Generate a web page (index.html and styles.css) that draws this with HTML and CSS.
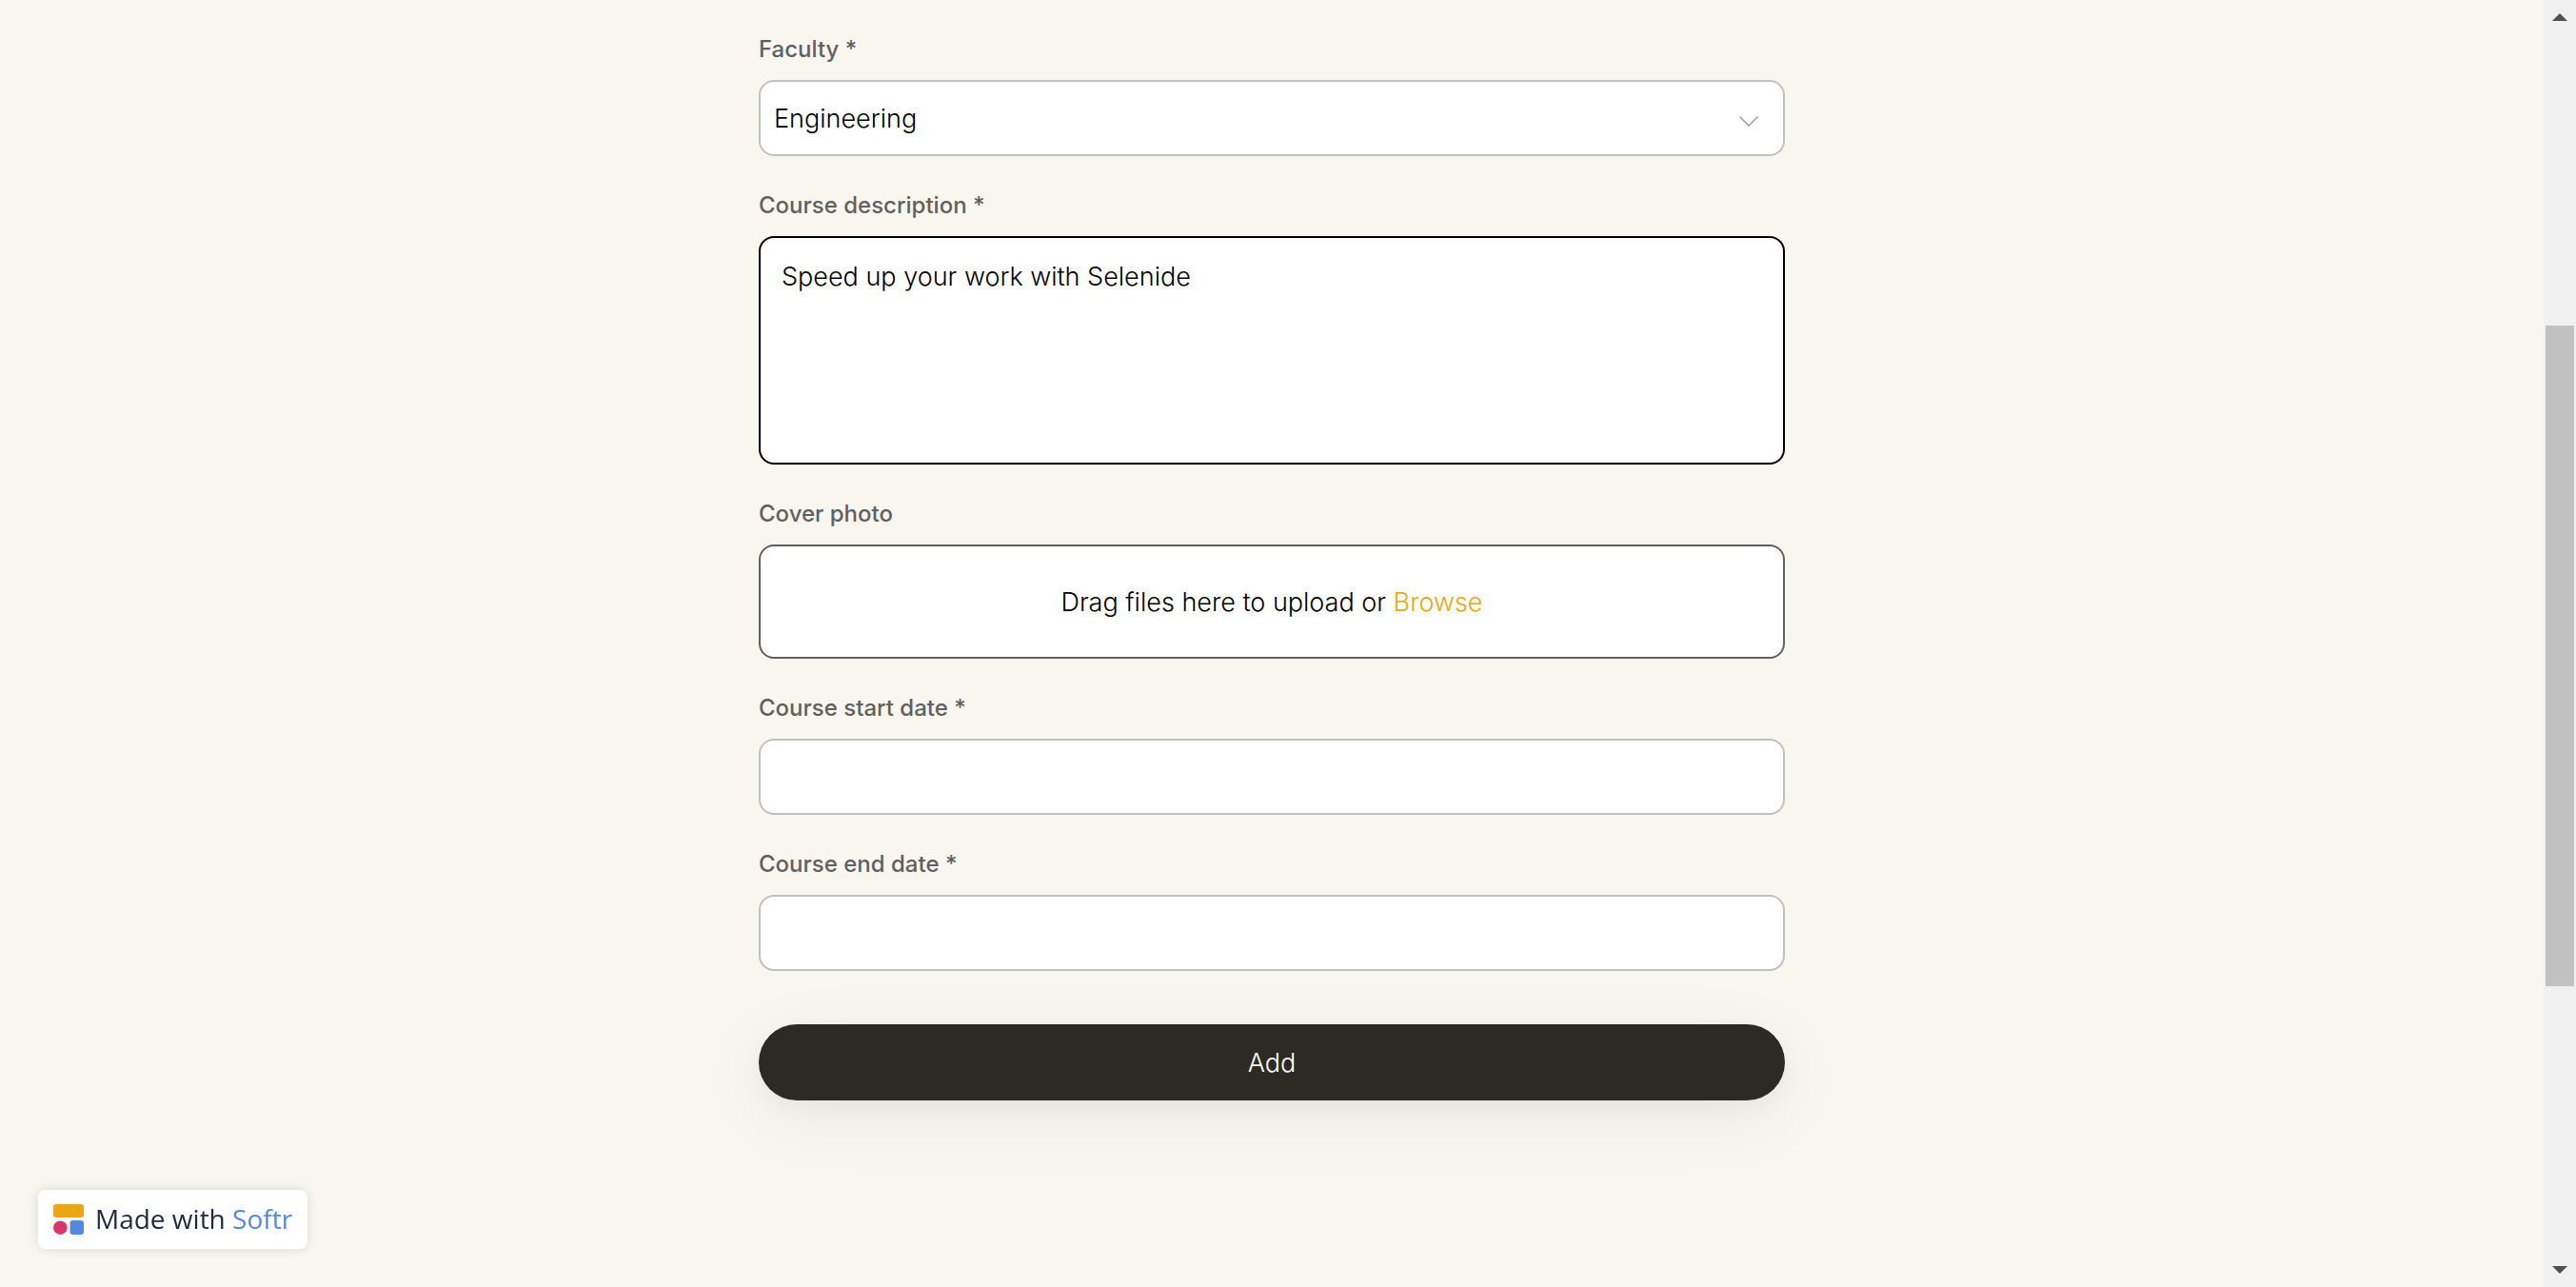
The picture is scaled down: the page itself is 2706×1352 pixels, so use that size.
FILE: index.html
```html
<!DOCTYPE html>
<html lang="en">
<head>
  <meta charset="utf-8">
  <meta name="viewport" content="width=device-width, initial-scale=1">
  <title>Add course</title>
  <link rel="stylesheet" href="styles.css">
</head>
<body>
  <div class="page">
    <main class="content">
      <form class="form">
        <div class="field">
          <label class="label" for="faculty">Faculty *</label>
          <div class="select">
            <select class="control select-input" id="faculty" required>
              <option selected>Engineering</option>
            </select>
            <svg class="chevron" width="20" height="12" viewBox="0 0 20 12" aria-hidden="true"><path d="M.5 1.500 10 11l9.500-9.500" fill="none" stroke="#999" stroke-width="1.400"/></svg>
          </div>
        </div>
        <div class="field">
          <label class="label" for="description">Course description *</label>
          <textarea class="control description" id="description" required>Speed up your work with Selenide</textarea>
        </div>
        <div class="field">
          <label class="label" for="cover">Cover photo</label>
          <div class="control upload">
            <span>Drag files here to upload or <label class="browse" for="cover">Browse</label></span>
            <input class="file" id="cover" type="file" hidden>
          </div>
        </div>
        <div class="field">
          <label class="label" for="start">Course start date *</label>
          <input class="control" id="start" type="text" required>
        </div>
        <div class="field">
          <label class="label" for="end">Course end date *</label>
          <input class="control" id="end" type="text" required>
        </div>
        <button class="submit" type="submit">Add</button>
      </form>
    </main>
    <div class="scrollbar" aria-hidden="true">
      <svg class="arrow" viewBox="0 0 34 34"><path d="M9 22h16l-8-8z"/></svg>
      <div class="track"><div class="thumb"></div></div>
      <svg class="arrow" viewBox="0 0 34 34"><path d="M9 12h16l-8 8z"/></svg>
    </div>
  </div>
  <a class="badge" href="#">
    <svg width="32" height="32" viewBox="0 0 32 32" aria-hidden="true">
      <rect width="32" height="14" rx="3" fill="#eca515"/>
      <circle cx="7.300" cy="24.700" r="7.300" fill="#d9366b"/>
      <rect x="17.500" y="17" width="14.500" height="15" rx="3" fill="#5587df"/>
    </svg>
    <span class="badge-text">Made with <span class="brand">Softr</span></span>
  </a>
</body>
</html>
```
FILE: styles.css
```css
* {
  box-sizing: border-box;
}

body {
  margin: 0;
  background: #f9f6ef;
  color: #000;
  font: 300 27px/42px Inter, sans-serif;
}

.page {
  display: flex;
  min-height: 100vh;
}

.content {
  flex: 1;
  padding: 34px 24px;
}

.form {
  display: flex;
  flex-direction: column;
  gap: 34px;
  max-width: 1078px;
  margin: 0 auto;
}

.field {
  display: flex;
  flex-direction: column;
  gap: 14px;
}

.label {
  color: #606060;
  font-size: 24px;
  font-weight: 500;
  line-height: 36px;
}

.control {
  width: 100%;
  min-height: 80px;
  padding: 0 24px;
  border: 2px solid #c0c0c0;
  border-radius: 16px;
  outline: none;
  background: #fff;
  color: inherit;
  font: inherit;
}

.select {
  display: grid;
  align-items: center;
}

.select-input {
  grid-area: 1 / 1;
  padding: 2px 14px 0;
  appearance: none;
}

.chevron {
  grid-area: 1 / 1;
  justify-self: end;
  margin-right: 28px;
  margin-top: 6px;
  pointer-events: none;
}

.description {
  display: block;
  height: 240px;
  padding: 20px 22px;
  border-color: #000;
  resize: none;
}

.upload {
  display: flex;
  align-items: center;
  justify-content: center;
  min-height: 120px;
  padding-top: 2px;
  border-color: #606060;
}

.browse {
  color: #e0ac10;
  cursor: pointer;
}

.submit {
  height: 80px;
  margin-top: 22px;
  padding: 2px 24px 0;
  border: 0;
  border-radius: 40px;
  background: #2d2a23;
  box-shadow: 0 16px 80px rgb(0 0 0 / 6%), 0 8px 24px rgb(0 0 0 / 4%);
  color: #fff;
  font: inherit;
}

.scrollbar {
  position: sticky;
  top: 0;
  display: flex;
  flex-direction: column;
  width: 34px;
  height: 100vh;
  background: #f0f0f0;
}

.arrow {
  width: 34px;
  height: 34px;
  fill: #505050;
}

.track {
  flex: 1;
  padding: 0 2px;
}

.track::before {
  display: block;
  height: 24%;
  content: "";
}

.thumb {
  height: 54%;
  background: #c1c1c1;
}

.badge {
  position: fixed;
  bottom: 40px;
  left: 40px;
  display: flex;
  align-items: center;
  gap: 12px;
  height: 62px;
  padding: 0 16px;
  border-radius: 8px;
  background: #fff;
  box-shadow: 0 0 12px rgb(0 0 0 / 12%);
  color: #212b41;
  font: 400 28px/40px "Open Sans", sans-serif;
  text-decoration: none;
}

.badge-text {
  padding-bottom: 2px;
}

.brand {
  color: #5587df;
}
```
